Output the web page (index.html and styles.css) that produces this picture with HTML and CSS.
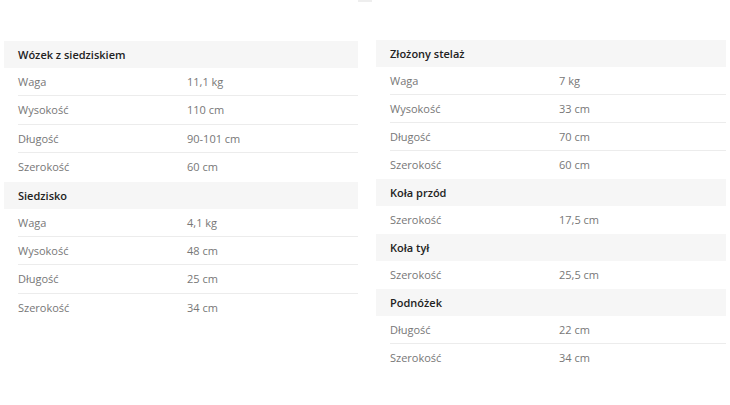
FILE: index.html
```html
<!DOCTYPE html>
<html lang="pl">
<head>
    <meta charset="UTF-8">
    <meta name="viewport" content="width=device-width, initial-scale=1.0">
    <title>Wymiary</title>
    <link rel="stylesheet" href="styles.css">
</head>
<body>
    <div class="top-mark"></div>
    <div class="specs">
        <div class="spec-table spec-left">
            <div class="spec-head">Wózek z siedziskiem</div>
            <div class="spec-row"><span class="spec-label">Waga</span><span class="spec-value">11,1 kg</span></div>
            <div class="spec-row"><span class="spec-label">Wysokość</span><span class="spec-value">110 cm</span></div>
            <div class="spec-row"><span class="spec-label">Długość</span><span class="spec-value">90-101 cm</span></div>
            <div class="spec-row"><span class="spec-label">Szerokość</span><span class="spec-value">60 cm</span></div>
            <div class="spec-head">Siedzisko</div>
            <div class="spec-row"><span class="spec-label">Waga</span><span class="spec-value">4,1 kg</span></div>
            <div class="spec-row"><span class="spec-label">Wysokość</span><span class="spec-value">48 cm</span></div>
            <div class="spec-row"><span class="spec-label">Długość</span><span class="spec-value">25 cm</span></div>
            <div class="spec-row"><span class="spec-label">Szerokość</span><span class="spec-value">34 cm</span></div>
        </div>
        <div class="spec-table spec-right">
            <div class="spec-head">Złożony stelaż</div>
            <div class="spec-row"><span class="spec-label">Waga</span><span class="spec-value">7 kg</span></div>
            <div class="spec-row"><span class="spec-label">Wysokość</span><span class="spec-value">33 cm</span></div>
            <div class="spec-row"><span class="spec-label">Długość</span><span class="spec-value">70 cm</span></div>
            <div class="spec-row"><span class="spec-label">Szerokość</span><span class="spec-value">60 cm</span></div>
            <div class="spec-head">Koła przód</div>
            <div class="spec-row"><span class="spec-label">Szerokość</span><span class="spec-value">17,5 cm</span></div>
            <div class="spec-head">Koła tył</div>
            <div class="spec-row"><span class="spec-label">Szerokość</span><span class="spec-value">25,5 cm</span></div>
            <div class="spec-head">Podnóżek</div>
            <div class="spec-row"><span class="spec-label">Długość</span><span class="spec-value">22 cm</span></div>
            <div class="spec-row"><span class="spec-label">Szerokość</span><span class="spec-value">34 cm</span></div>
        </div>
    </div>
</body>
</html>
```

FILE: styles.css
```css
body {
    margin: 0;
    background: #fff;
    font-family: "Open Sans", "Noto Sans", Arial, sans-serif;
    font-size: 11px;
}
.top-mark {
    width: 14px;
    height: 2px;
    margin: 0 auto;
    background: #eeeeee;
}
.specs {
    display: flex;
    gap: 18px;
    padding: 38px 4px 0 4px;
}
.spec-table {
    flex: none;
}
.spec-left {
    width: 354px;
    margin-top: 1px;
}
.spec-right {
    width: 350px;
}
.spec-head {
    height: 27px;
    line-height: 27px;
    padding-left: 14px;
    background: #f6f6f6;
    color: #222;
    font-weight: 600;
}
.spec-row {
    display: flex;
    height: 27px;
    line-height: 27px;
    margin-left: 14px;
    border-bottom: 1px solid #ececec;
    color: #777;
}
.spec-left .spec-row {
    height: 27.4px;
}
.spec-row:last-child,
.spec-row:has(+ .spec-head) {
    border-bottom-color: transparent;
}
.spec-label {
    width: 169px;
}
```
